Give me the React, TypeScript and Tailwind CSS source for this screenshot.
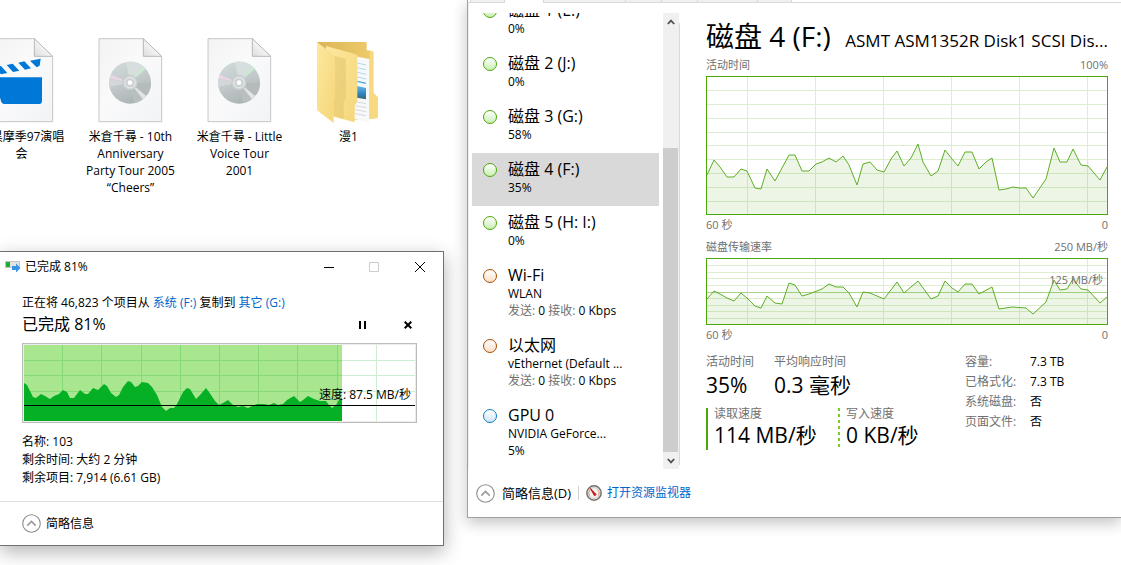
import { useId } from "react";
import type { ReactNode } from "react";

type Point = [number, number];

type DesktopItem = {
  label: string;
  icon: ReactNode;
};

type Resource = {
  name: string;
  tone: "disk" | "network" | "gpu";
  lines: ReactNode[];
  selected?: boolean;
};

const activePoints: Point[] = [
  [0, 98], [7, 83], [13, 90], [20, 100], [27, 100], [34, 92], [40, 94], [48, 111], [54, 112], [60, 92],
  [68, 104], [82, 78], [88, 78], [95, 94], [102, 94], [109, 87], [115, 85], [122, 81], [129, 85], [136, 79],
  [142, 88], [150, 108], [156, 87], [163, 85], [170, 93], [177, 95], [184, 82], [190, 74], [197, 89], [204, 81],
  [211, 67], [216, 85], [224, 99], [231, 94], [238, 73], [245, 82], [251, 89], [258, 75], [265, 75], [272, 92],
  [279, 85], [285, 81], [292, 113], [299, 112], [306, 110], [312, 111], [319, 111], [326, 121], [339, 102],
  [347, 71], [353, 85], [360, 85], [366, 72], [374, 88], [381, 89], [393, 103], [400, 90],
];

const transferPoints: Point[] = [
  [0, 40], [7, 32], [13, 35], [20, 39], [27, 42], [34, 34], [40, 39], [48, 47], [54, 49], [60, 37],
  [68, 44], [75, 45], [82, 24], [88, 26], [95, 37], [102, 35], [115, 30], [122, 25], [129, 28], [136, 28],
  [142, 34], [150, 48], [156, 33], [163, 34], [177, 40], [190, 23], [197, 34], [204, 28], [211, 22],
  [224, 40], [231, 37], [238, 22], [245, 29], [251, 33], [258, 25], [265, 25], [272, 35], [285, 28],
  [292, 50], [305, 48], [319, 49], [326, 55], [339, 43], [347, 21], [353, 31], [360, 30], [366, 20],
  [374, 30], [381, 31], [393, 44], [400, 38],
];

const copyPoints: Point[] = [
  [0, 38], [3, 40], [7, 48], [9, 52], [12, 53], [17, 49], [21, 51], [26, 54], [30, 51], [35, 49], [39, 45],
  [43, 47], [46, 53], [50, 53], [56, 45], [61, 49], [64, 49], [69, 43], [74, 45], [80, 39], [83, 41], [87, 48],
  [92, 52], [95, 50], [99, 42], [104, 36], [107, 37], [111, 42], [114, 41], [118, 37], [124, 38], [128, 42],
  [133, 50], [138, 62], [142, 66], [146, 63], [150, 63], [153, 59], [159, 47], [163, 43], [166, 44], [172, 54],
  [176, 50], [182, 43], [185, 47], [191, 56], [195, 60], [199, 58], [204, 55], [209, 60], [214, 62], [219, 61],
  [224, 63], [228, 61], [233, 59], [240, 59], [245, 60], [250, 58], [254, 60], [259, 59], [263, 55], [270, 51],
  [276, 57], [279, 55], [284, 51], [290, 54], [296, 56], [302, 56], [305, 60], [308, 63], [312, 60], [315, 55],
  [318, 53],
];

const copyColumns = [38, 77, 117, 156, 195, 234, 273, 313, 352];
const copyRows = [15, 30, 46];
const diskColumns = [40, 108, 176, 244, 312, 380];

function toPath(points: Point[]) {
  return "M" + points.map(([x, y]) => `${x} ${y}`).join("L");
}

function DocumentShape({ children }: { children: ReactNode }) {
  const id = useId();

  return (
    <svg width="65" height="85" viewBox="0 0 195 255" aria-hidden="true">
      <defs>
        <linearGradient id={`${id}page`} x1="0" y1="0" x2="1" y2="1">
          <stop offset="0" stopColor="#f3f3f4" />
          <stop offset="0.45" stopColor="#fafafb" />
          <stop offset="1" stopColor="#f1f3f5" />
        </linearGradient>
        <linearGradient id={`${id}fold`} x1="0" y1="1" x2="1" y2="0">
          <stop offset="0" stopColor="#dcdcdc" />
          <stop offset="0.5" stopColor="#f4f4f4" />
          <stop offset="1" stopColor="#ffffff" />
        </linearGradient>
      </defs>
      <path
        d="M3 2H136L191 55V251H3Z"
        fill={`url(#${id}page)`}
        stroke="#c6c6c8"
        strokeWidth="3"
      />
      <path d="M136 2V55H191Z" fill={`url(#${id}fold)`} stroke="#b9b9bb" strokeWidth="3" />
      {children}
    </svg>
  );
}

function VideoIcon() {
  return (
    <DocumentShape>
      <g fill="#0078d7">
        <path d="M33 118H159V188Q159 198 149 198H44Q38 198 36 190L33 178Z" />
        <path d="M18 88L36 84L55 105L36 109Z" />
        <path d="M53 81L71 77L91 98L72 102Z" />
        <path d="M88 74L106 70L126 91L108 95Z" />
        <path d="M123 68L155 62L152 83L143 88Z" />
      </g>
    </DocumentShape>
  );
}

function DiscIcon() {
  const id = useId();

  return (
    <DocumentShape>
      <defs>
        <linearGradient id={`${id}disc`} x1="0.2" y1="0" x2="0.6" y2="1">
          <stop offset="0" stopColor="#cfdad9" />
          <stop offset="0.5" stopColor="#c3c9cb" />
          <stop offset="1" stopColor="#aab3b4" />
        </linearGradient>
      </defs>
      <circle cx="96" cy="134" r="63" fill={`url(#${id}disc)`} />
      <path d="M96 134L84 72A63 63 0 0 1 138 87Z" fill="#d6dfde" />
      <path d="M96 134L34 146A63 63 0 0 1 34 122Z" fill="#d4d7d9" />
      <path d="M96 134L35 121A63 63 0 0 1 38 110Z" fill="#ecd5e6" />
      <path d="M96 134L136 86A63 63 0 0 1 143 93Z" fill="#c6ebcf" />
      <path d="M96 134L159 134A63 63 0 0 1 148 170Z" fill="#b5babb" />
      <path d="M96 134L145 174A63 63 0 0 1 134 184Z" fill="#e2e4e4" />
      <path d="M96 134L134 184A63 63 0 0 1 109 196Z" fill="#b9bfbf" />
      <circle cx="96" cy="134" r="22" fill="#d3d8d9" stroke="#bcc2c3" strokeWidth="2" />
      <circle cx="96" cy="134" r="15" fill="#cbd1d2" stroke="#e6e9e9" strokeWidth="3" />
      <circle cx="96" cy="134" r="7" fill="#ffffff" />
    </DocumentShape>
  );
}

function FolderIcon() {
  const id = useId();

  return (
    <svg width="65" height="85" viewBox="0 -3 195 255" aria-hidden="true">
      <defs>
        <linearGradient id={`${id}front`} x1="0" y1="0" x2="1" y2="1">
          <stop offset="0" stopColor="#fde89f" />
          <stop offset="1" stopColor="#f5d679" />
        </linearGradient>
        <linearGradient id={`${id}back`} x1="0" y1="0" x2="1" y2="0">
          <stop offset="0" stopColor="#dcb656" />
          <stop offset="1" stopColor="#f0cc6c" />
        </linearGradient>
        <linearGradient id={`${id}photo`} x1="0" y1="0" x2="0" y2="1">
          <stop offset="0" stopColor="#6db9e8" />
          <stop offset="0.6" stopColor="#2f83bf" />
          <stop offset="1" stopColor="#3f6660" />
        </linearGradient>
      </defs>
      <path d="M3 9H148Q152 9 152 13V34L168 36Q172 37 172 41V161L185 175V237L120 243L60 226L3 212Z" fill={`url(#${id}back)`} />
      <path d="M161 36L168 36Q172 37 172 41V161L185 175V237L161 241Z" fill="#f6d981" />
      <path d="M118 52L160 60V250L114 240Z" fill="#f7f8fa" />
      <g stroke="#c3c8cd" strokeWidth="2">
        <path d="M118 188L150 194M118 200L150 206M118 212L150 218M118 224L150 230" />
      </g>
      <g stroke="#8ac7ec" strokeWidth="2">
        <path d="M124 72L150 78M124 86L150 92M124 100L150 106M124 114L150 120" />
      </g>
      <path d="M124 127L150 133" stroke="#4aa3dc" strokeWidth="4" />
      <path d="M122 140L150 147V181L122 176Z" fill={`url(#${id}photo)`} />
      <path d="M30 21L117 45Q124 47 124 54V186L116 200V250L54 233L30 190Z" fill={`url(#${id}front)`} />
      <path d="M54 50L90 60V178L83 190V240L54 232Z" fill="#e3c56c" opacity="0.55" />
      <path d="M3 9L50 46Q57 51 57 58V180L53 190V252L3 214Z" fill={`url(#${id}front)`} />
    </svg>
  );
}

const desktopItems: DesktopItem[] = [
  { label: "大黒摩季97演唱\n会", icon: <VideoIcon /> },
  { label: "米倉千尋 - 10th\nAnniversary\nParty Tour 2005\n“Cheers”", icon: <DiscIcon /> },
  { label: "米倉千尋 - Little\nVoice Tour\n2001", icon: <DiscIcon /> },
  { label: "漫1", icon: <FolderIcon /> },
];

function NetworkRates() {
  return (
    <>
      <span className="text-[#707070]">发送:</span> 0 <span className="text-[#707070]">接收:</span> 0 Kbps
    </>
  );
}

const resources: Resource[] = [
  { name: "磁盘 1 (E:)", tone: "disk", lines: ["0%"] },
  { name: "磁盘 2 (J:)", tone: "disk", lines: ["0%"] },
  { name: "磁盘 3 (G:)", tone: "disk", lines: ["58%"] },
  { name: "磁盘 4 (F:)", tone: "disk", lines: ["35%"], selected: true },
  { name: "磁盘 5 (H: I:)", tone: "disk", lines: ["0%"] },
  { name: "Wi-Fi", tone: "network", lines: ["WLAN", <NetworkRates />] },
  { name: "以太网", tone: "network", lines: ["vEthernet (Default ...", <NetworkRates />] },
  { name: "GPU 0", tone: "gpu", lines: ["NVIDIA GeForce...", "5%"] },
];

const toneClasses = {
  disk: "border-[#4da60c] from-white to-[#c9efb0]",
  network: "border-[#a74f01] from-white to-[#fbdfc9]",
  gpu: "border-[#117dbb] from-white to-[#cfe5f3]",
};

const diskDetails = [
  ["容量:", "7.3 TB"],
  ["已格式化:", "7.3 TB"],
  ["系统磁盘:", "否"],
  ["页面文件:", "否"],
];

function CollapseIcon() {
  return (
    <svg width="19" height="19" viewBox="0 0 19 19" fill="none" aria-hidden="true">
      <circle cx="9.5" cy="9.5" r="8.8" stroke="#8c8c8c" strokeWidth="1.1" />
      <path d="M5.3 11.6L9.5 7.4L13.7 11.6" stroke="#9a9a9a" strokeWidth="1.6" />
    </svg>
  );
}

function GaugeIcon() {
  return (
    <svg width="16" height="16" viewBox="0 0 17 17" fill="none" aria-hidden="true">
      <circle cx="8.5" cy="8.5" r="7.6" fill="#f3f1ef" stroke="#77706c" strokeWidth="1.6" />
      <circle cx="8.5" cy="8.5" r="5.8" stroke="#c9c5c2" strokeWidth="1" />
      <path d="M4 11.5A5.4 5.4 0 0 1 4.5 5M12.5 5A5.4 5.4 0 0 1 13 11.5" stroke="#d9a58c" strokeWidth="1" />
      <path d="M4.6 3.6L10.8 10.2L9 11.4Z" fill="#c81414" stroke="#c81414" strokeWidth="1" />
    </svg>
  );
}

type UsageChartProps = {
  points: Point[];
  height: number;
  rows: number[];
  middle?: number;
  className: string;
};

function UsageChart({ points, height, rows, middle, className }: UsageChartProps) {
  const line = toPath(points);

  return (
    <svg
      viewBox={`0 0 400 ${height}`}
      preserveAspectRatio="none"
      fill="none"
      className={`block w-full ${className}`}
    >
      <g stroke="#dcedd0" shapeRendering="crispEdges">
        {rows.map((y) => (
          <path key={y} d={`M0 ${y + 0.5}H400`} />
        ))}
        {diskColumns.map((x) => (
          <path key={x} d={`M${x + 0.5} 0V${height}`} />
        ))}
        {middle && <path d={`M0 ${middle + 0.5}H400`} stroke="#a6d58a" />}
      </g>
      <path d={`${line}L400 ${height}L0 ${height}Z`} fill="#4da60c" fillOpacity="0.1" />
      <path d={line} stroke="#5fae27" vectorEffect="non-scaling-stroke" />
    </svg>
  );
}

function ChartCaption({ left, right, className }: { left: string; right: string; className: string }) {
  return (
    <div className={`flex justify-between text-[11px] text-[#707070] ${className}`}>
      <span>{left}</span>
      <span>{right}</span>
    </div>
  );
}

function ResourceList() {
  return (
    <div className="w-[187px] shrink-0 overflow-hidden">
      <div className="-mt-[19px]">
        {resources.map((resource) => (
          <button
            key={resource.name}
            type="button"
            className={`flex w-full items-start gap-[11px] pt-1.5 pb-2.5 pl-[11px] text-left ${
              resource.selected ? "bg-[#d9d9d9]" : "bg-white"
            }`}
          >
            <span
              className={`mt-1 size-[14px] shrink-0 rounded-full border bg-linear-to-b ${toneClasses[resource.tone]}`}
            />
            <span className="min-w-0 whitespace-nowrap">
              <span className="block text-base leading-5">{resource.name}</span>
              {resource.lines.map((line, index) => (
                <span key={index} className="block text-xs leading-[17px]">
                  {line}
                </span>
              ))}
            </span>
          </button>
        ))}
      </div>
    </div>
  );
}

function ScrollBar() {
  return (
    <div className="ml-1 flex w-4 shrink-0 flex-col bg-[#f0f0f0]">
      <button type="button" aria-label="向上滚动" className="flex h-[17px] items-center justify-center">
        <svg width="8" height="6" viewBox="0 0 8 6" fill="none" stroke="#505050" strokeWidth="1.8">
          <path d="M0.8 5L4 1.6L7.2 5" />
        </svg>
      </button>
      <div className="flex-[118]" />
      <div className="mr-px flex-[304] bg-[#cdcdcd]" />
      <button type="button" aria-label="向下滚动" className="flex h-[17px] items-center justify-center">
        <svg width="8" height="6" viewBox="0 0 8 6" fill="none" stroke="#505050" strokeWidth="1.8">
          <path d="M0.8 1L4 4.4L7.2 1" />
        </svg>
      </button>
    </div>
  );
}

function TaskManager() {
  return (
    <section className="absolute top-0 right-0 left-[467px] border-b border-l border-[#a0a0a0] bg-white shadow-[0_5px_14px_rgba(0,0,0,0.24)]">
      <div className="flex h-[3px]">
        <div className="w-0.5 border-b border-[#d9d9d9]" />
        <div className="w-[35px] border-r border-b border-l border-[#d9d9d9] bg-[#f0f0f0]" />
        <div className="w-[38px]" />
        <div className="w-[83px] border-r border-b border-l border-[#d9d9d9] bg-[#f0f0f0]" />
        <div className="w-9 border-r border-b border-[#d9d9d9] bg-[#f0f0f0]" />
        <div className="w-9 border-r border-b border-[#d9d9d9] bg-[#f0f0f0]" />
        <div className="w-[60px] border-r border-b border-[#d9d9d9] bg-[#f0f0f0]" />
        <div className="w-[34px] border-r border-b border-[#d9d9d9] bg-[#f0f0f0]" />
        <div className="flex-1 border-b border-[#d9d9d9]" />
      </div>

      <div className="flex border-l border-[#f0f0f0]">
        <div className="flex pt-2.5 pl-[3px]">
          <ResourceList />
          <ScrollBar />
          <div className="mt-2.5 mb-1 w-px bg-[#d9d9d9]" />
        </div>

        <div className="min-w-0 flex-1 pt-[13px] pr-[13px] pl-[26px]">
          <div className="flex items-baseline justify-between gap-3 whitespace-nowrap">
            <h1 className="text-[28px] leading-10">磁盘 4 (F:)</h1>
            <p className="min-w-0 text-[17px] leading-6">ASMT ASM1352R Disk1 SCSI Dis...</p>
          </div>

          <ChartCaption left="活动时间" right="100%" className="leading-[18px]" />
          <div className="mt-0.5 border border-[#4da60c]">
            <UsageChart
              points={activePoints}
              height={137}
              rows={[13, 27, 41, 55, 68, 82, 96, 110, 124]}
              className="h-[137px]"
            />
          </div>
          <ChartCaption left="60 秒" right="0" className="leading-5" />

          <ChartCaption left="磁盘传输速率" right="250 MB/秒" className="mt-[3px] leading-[18px]" />
          <div className="relative mt-0.5 border border-[#4da60c]">
            <UsageChart
              points={transferPoints}
              height={65}
              rows={[6, 13, 19, 26, 39, 46, 52, 59]}
              middle={33}
              className="h-[65px]"
            />
            <span className="absolute top-3 right-1 text-[11px] leading-[18px] text-[#707070]">125 MB/秒</span>
          </div>
          <ChartCaption left="60 秒" right="0" className="leading-5" />

          <div className="mt-[7px] flex whitespace-nowrap">
            <div className="w-[259px] shrink-0">
              <dl className="flex">
                <div className="w-[68px]">
                  <dt className="text-xs leading-5 text-[#707070]">活动时间</dt>
                  <dd className="text-[21px] leading-[26px]">35%</dd>
                </div>
                <div>
                  <dt className="text-xs leading-5 text-[#707070]">平均响应时间</dt>
                  <dd className="text-[21px] leading-[26px]">0.3 毫秒</dd>
                </div>
              </dl>
              <dl className="mt-2.5 flex">
                <div className="w-[132px] border-l-2 border-[#4da60c] pl-1.5">
                  <dt className="text-xs leading-3 text-[#707070]">读取速度</dt>
                  <dd className="text-[21px] leading-[30px]">114 MB/秒</dd>
                </div>
                <div className="bg-[repeating-linear-gradient(#77d022_0_3px,transparent_3px_6px)] bg-[length:2px_100%] bg-no-repeat pl-2">
                  <dt className="text-xs leading-3 text-[#707070]">写入速度</dt>
                  <dd className="text-[21px] leading-[30px]">0 KB/秒</dd>
                </div>
              </dl>
            </div>

            <dl className="text-xs leading-5">
              {diskDetails.map(([label, value]) => (
                <div key={label} className="flex">
                  <dt className="w-[65px] text-[#707070]">{label}</dt>
                  <dd>{value}</dd>
                </div>
              ))}
            </dl>
          </div>
        </div>
      </div>

      <footer className="flex items-center py-3.5 pl-2">
        <button type="button" className="flex items-center gap-[7px] text-[13px] leading-5">
          <CollapseIcon />
          简略信息(D)
        </button>
        <div className="mx-[7px] h-3.5 w-px bg-[#d0d0d0]" />
        <a href="#resource-monitor" className="flex items-center gap-[5px] text-xs leading-5 text-[#0066cc]">
          <GaugeIcon />
          打开资源监视器
        </a>
      </footer>
    </section>
  );
}

function SpeedGraph() {
  return (
    <div className="relative mt-1.5 border border-[#bcbcbc] bg-[#ececec] p-px">
      <svg viewBox="0 0 391 76" preserveAspectRatio="none" className="block h-[76px] w-full bg-white">
        <g fill="none" stroke="#cdeed3" shapeRendering="crispEdges">
          {copyRows.map((y) => (
            <path key={y} d={`M0 ${y + 0.5}H391`} />
          ))}
          {copyColumns.map((x) => (
            <path key={x} d={`M${x + 0.5} 0V76`} />
          ))}
        </g>
        <path d="M0 0H318V76H0Z" fill="#a8e68f" />
        <g fill="none" stroke="#86da75" shapeRendering="crispEdges">
          {copyRows.map((y) => (
            <path key={y} d={`M0 ${y + 0.5}H318`} />
          ))}
          {copyColumns.slice(0, -1).map((x) => (
            <path key={x} d={`M${x + 0.5} 0V76`} />
          ))}
        </g>
        <path d={`${toPath(copyPoints)}V76H0Z`} fill="#06b025" />
        <path d="M0 60.5H391" stroke="#000000" shapeRendering="crispEdges" />
      </svg>
      <span className="absolute right-[5px] bottom-[18px] text-xs leading-[18px]">速度: 87.5 MB/秒</span>
    </div>
  );
}

function CopyDialog() {
  return (
    <section className="absolute top-[251px] left-0 w-[444px] border-t border-r border-b border-[#707070] bg-white shadow-[0_6px_18px_rgba(0,0,0,0.3)]">
      <header className="flex h-[29px] items-center">
        <svg width="16" height="12" viewBox="0 0 16 12" className="ml-[5px]" aria-hidden="true">
          <path d="M0.5 0.5H14.5V6.5H0.5Z" fill="#e3e3e3" stroke="#c4c4c4" />
          <path d="M1 1H5V6H1Z" fill="#1fae32" />
          <path d="M7 5H11V2.5L15.5 7L11 11.5V9H7Z" fill="#3894e4" />
        </svg>
        <h2 className="ml-1 flex-1 text-xs leading-[18px]">已完成 81%</h2>
        <button type="button" aria-label="最小化" className="flex h-7 w-[45px] items-center justify-center">
          <svg width="10" height="10" viewBox="0 0 10 10" stroke="#000000" shapeRendering="crispEdges">
            <path d="M0 5.5H10" />
          </svg>
        </button>
        <button type="button" aria-label="最大化" disabled className="flex h-7 w-[45px] items-center justify-center">
          <svg width="10" height="10" viewBox="0 0 10 10" fill="none" stroke="#cccccc">
            <path d="M0.5 0.5H9.5V9.5H0.5Z" />
          </svg>
        </button>
        <button type="button" aria-label="关闭" className="flex h-7 w-[47px] items-center justify-center">
          <svg width="10" height="10" viewBox="0 0 10 10" stroke="#000000">
            <path d="M0 0L10 10M10 0L0 10" />
          </svg>
        </button>
      </header>

      <div className="pt-[13px] pr-[26px] pl-[22px]">
        <p className="text-xs leading-[18px]">
          正在将 46,823 个项目从{" "}
          <a href="#source" className="text-[#0066cc]">
            系统 (F:)
          </a>{" "}
          复制到{" "}
          <a href="#target" className="text-[#0066cc]">
            其它 (G:)
          </a>
        </p>

        <div className="flex items-center justify-between pr-px">
          <p className="text-base leading-[25px]">已完成 81%</p>
          <div className="flex gap-[30px]">
            <button type="button" aria-label="暂停" className="flex size-4 items-center justify-center">
              <svg width="8" height="8" viewBox="0 0 8 8">
                <path d="M1 0H3V8H1ZM6 0H8V8H6Z" fill="#000000" />
              </svg>
            </button>
            <button type="button" aria-label="取消" className="flex size-4 items-center justify-center">
              <svg width="8" height="8" viewBox="0 0 8 8" stroke="#000000" strokeWidth="2">
                <path d="M0.7 0.7L7.3 7.3M7.3 0.7L0.7 7.3" />
              </svg>
            </button>
          </div>
        </div>

        <SpeedGraph />

        <div className="mt-2.5 text-xs leading-[18px]">
          <p>名称: 103</p>
          <p>剩余时间: 大约 2 分钟</p>
          <p>剩余项目: 7,914 (6.61 GB)</p>
        </div>
      </div>

      <footer className="mt-3.5 border-t border-[#dfdfdf] py-3 pl-[22px]">
        <button type="button" className="flex items-center gap-[5px] text-xs leading-[19px]">
          <CollapseIcon />
          简略信息
        </button>
      </footer>
    </section>
  );
}

export default function App() {
  return (
    <main className="relative min-h-screen overflow-hidden bg-white font-['Open_Sans','Noto_Sans_CJK_SC',sans-serif] text-black">
      <ul className="-ml-[33px] flex pt-[38px]">
        {desktopItems.map((item) => (
          <li key={item.label} className="flex w-[109px] shrink-0 flex-col items-center">
            {item.icon}
            <span className="mt-[5px] text-center text-xs leading-[17px] whitespace-pre">{item.label}</span>
          </li>
        ))}
      </ul>
      <TaskManager />
      <CopyDialog />
    </main>
  );
}
